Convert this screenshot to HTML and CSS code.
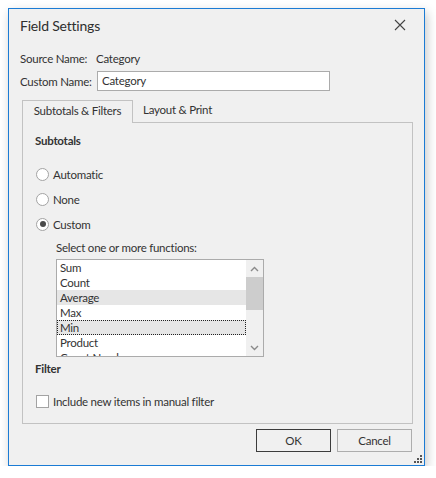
FILE: index.html
```html
<!DOCTYPE html>
<html>
<head>
<meta charset="utf-8">
<link rel="stylesheet" href="styles.css">
</head>
<body>
<div class="dialog">
  <div class="titlebar">
    <span class="title">Field Settings</span>
    <span class="close"><svg width="12" height="12" viewBox="0 0 12 12"><path d="M1 1 L11 11 M11 1 L1 11" stroke="#444" stroke-width="1.1" fill="none"/></svg></span>
  </div>
  <div class="content">
    <div class="field-row">
      <span class="lbl">Source Name:</span>
      <span class="val">Category</span>
    </div>
    <div class="field-row input-row">
      <span class="lbl">Custom Name:</span>
      <div class="input">Category</div>
    </div>
    <div class="tabs">
      <div class="tab active">Subtotals &amp; Filters</div>
      <div class="tab">Layout &amp; Print</div>
    </div>
    <div class="panel">
      <div class="section-title">Subtotals</div>
      <div class="radios">
        <div class="opt"><span class="radio"></span><span>Automatic</span></div>
        <div class="opt"><span class="radio"></span><span>None</span></div>
        <div class="opt"><span class="radio checked"></span><span>Custom</span></div>
      </div>
      <div class="functions">
        <div class="fn-label">Select one or more functions:</div>
        <div class="listbox">
          <div class="items">
            <div class="item">Sum</div>
            <div class="item">Count</div>
            <div class="item selected">Average</div>
            <div class="item">Max</div>
            <div class="item selected focused">Min</div>
            <div class="item">Product</div>
            <div class="item">Count Numbers</div>
          </div>
          <div class="scrollbar">
            <div class="sb-btn"><svg width="9" height="6" viewBox="0 0 9 6"><path d="M1 5 L4.5 1.5 L8 5" stroke="#8a8a8a" stroke-width="1.4" fill="none"/></svg></div>
            <div class="sb-track"><div class="sb-thumb"></div></div>
            <div class="sb-btn"><svg width="9" height="6" viewBox="0 0 9 6"><path d="M1 1 L4.5 4.5 L8 1" stroke="#8a8a8a" stroke-width="1.4" fill="none"/></svg></div>
          </div>
        </div>
      </div>
      <div class="section-title filter-title">Filter</div>
      <div class="opt check-opt"><span class="checkbox"></span><span>Include new items in manual filter</span></div>
    </div>
  </div>
  <div class="footer">
    <div class="btn default">OK</div>
    <div class="btn">Cancel</div>
  </div>
  <svg class="grip" width="9" height="9" viewBox="0 0 9 9">
    <rect x="6" y="0" width="2" height="2" fill="#555"/>
    <rect x="3" y="3" width="2" height="2" fill="#555"/>
    <rect x="6" y="3" width="2" height="2" fill="#555"/>
    <rect x="0" y="6" width="2" height="2" fill="#555"/>
    <rect x="3" y="6" width="2" height="2" fill="#555"/>
    <rect x="6" y="6" width="2" height="2" fill="#555"/>
  </svg>
</div>
</body>
</html>
```

FILE: styles.css
```css
* { box-sizing: border-box; }
html, body { margin: 0; padding: 0; background: #ffffff; }
body {
  font-family: "Lato", "Open Sans", sans-serif;
  font-size: 11.5px;
  letter-spacing: -0.25px;
  color: #333333;
}
.dialog {
  position: relative;
  margin: 8px 0 0 8px;
  width: 417px;
  height: 458px;
  border: 1px solid #1b7bd4;
  background: #f0f0f0;
  box-shadow: 2px 4px 10px rgba(0,0,0,0.22);
  display: flex;
  flex-direction: column;
}
.titlebar {
  height: 32px;
  display: flex;
  align-items: center;
  justify-content: space-between;
  padding-left: 11px;
  padding-right: 18px;
}
.title {
  font-size: 14px;
  letter-spacing: -0.2px;
  color: #2e2e2e;
}
.close { display: flex; width: 12px; height: 12px; }
.content { padding: 9px 11px 0 11px; }
.field-row {
  display: flex;
  align-items: center;
  height: 16px;
  white-space: nowrap;
}
.lbl { width: 77px; flex: none; }
.val { margin-left: -1px; }
.input-row { margin-top: 5px; height: 20px; }
.input {
  width: 233px;
  height: 20px;
  border: 1px solid #ababab;
  background: #fff;
  padding-left: 4px;
  line-height: 18px;
}
.tabs {
  display: flex;
  margin-top: 9px;
  margin-left: 2px;
  height: 22px;
  white-space: nowrap;
}
.tab {
  height: 22px;
  line-height: 20px;
  padding: 0 10px;
  color: #333;
}
.tab.active {
  width: 111px;
  border: 1px solid #c2c2c2;
  border-bottom: none;
  text-align: center;
  padding: 0;
  position: relative;
  z-index: 1;
  background: #f0f0f0;
  height: 23px;
}
.panel {
  margin-left: 2px;
  width: 391px;
  height: 302px;
  border: 1px solid #c2c2c2;
  padding: 0 0 0 12px;
}
.section-title {
  font-weight: bold;
  margin-top: 10px;
  height: 16px;
  line-height: 16px;
}
.radios { margin-top: 17px; display: flex; flex-direction: column; gap: 9px; }
.opt { display: flex; align-items: center; height: 16px; gap: 4px; white-space: nowrap; }
.radio {
  width: 13px; height: 13px; border-radius: 50%;
  border: 1px solid #a3a3a3; background: #fff;
  margin-left: 1px;
  display: flex; align-items: center; justify-content: center;
}
.radio.checked::after {
  content: ""; width: 6px; height: 6px; border-radius: 50%; background: #4a4a4a;
}
.functions { margin-left: 21px; margin-top: 8px; }
.fn-label { height: 16px; line-height: 16px; }
.listbox {
  margin-top: 3px;
  width: 208px; height: 98px;
  border: 1px solid #ababab;
  background: #fff;
  display: flex;
  overflow: hidden;
}
.items { flex: 1; overflow: hidden; }
.item { height: 15px; line-height: 15px; padding-left: 3px; white-space: nowrap; }
.item.selected { background: #e6e6e6; }
.item.focused { outline: 1px dotted #222; outline-offset: -1px; }
.scrollbar { width: 17px; display: flex; flex-direction: column; background: #f0f0f0; }
.sb-btn { height: 17px; display: flex; align-items: center; justify-content: center; }
.sb-track { flex: 1; }
.sb-thumb { height: 33px; background: #cdcdcd; }
.filter-title { margin-top: 4px; }
.check-opt { margin-top: 16px; }
.checkbox {
  width: 13px; height: 13px; border: 1px solid #a3a3a3; background: #fff; margin-left: 1px;
}
.footer {
  display: flex;
  justify-content: flex-end;
  gap: 6px;
  padding: 5px 12px 0 0;
}
.btn {
  width: 75px; height: 23px;
  border: 1px solid #adadad;
  background: #f0f0f0;
  display: flex; align-items: center; justify-content: center;
}
.btn.default { border-color: #3c3c3c; }
.grip { position: absolute; right: 1px; bottom: 1px; }
```
